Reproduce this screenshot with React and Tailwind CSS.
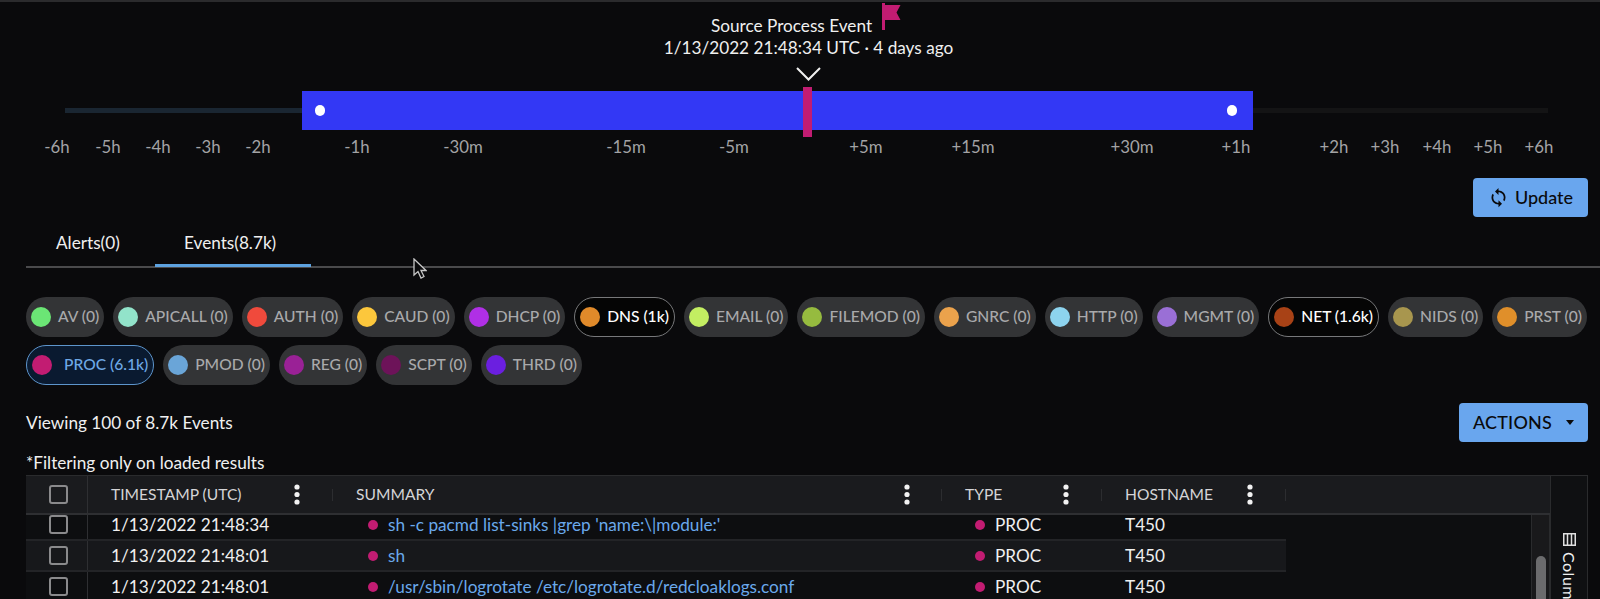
import React from 'react';
import { MdSync } from 'react-icons/md';

const ticks = [
  ['-6h', 57], ['-5h', 108], ['-4h', 158], ['-3h', 208], ['-2h', 258], ['-1h', 357],
  ['-30m', 463], ['-15m', 626], ['-5m', 734], ['+5m', 866], ['+15m', 973], ['+30m', 1132],
  ['+1h', 1236], ['+2h', 1334], ['+3h', 1385], ['+4h', 1437], ['+5h', 1488], ['+6h', 1539],
];

const chips = [
  { label: 'AV (0)', color: '#6be675' },
  { label: 'APICALL (0)', color: '#92e3ca' },
  { label: 'AUTH (0)', color: '#f04a3c' },
  { label: 'CAUD (0)', color: '#fcc73c' },
  { label: 'DHCP (0)', color: '#b02fe6' },
  { label: 'DNS (1k)', color: '#e08a2a', state: 'on' },
  { label: 'EMAIL (0)', color: '#c3ee62' },
  { label: 'FILEMOD (0)', color: '#96bb3f' },
  { label: 'GNRC (0)', color: '#eba24c' },
  { label: 'HTTP (0)', color: '#8dd3ee' },
  { label: 'MGMT (0)', color: '#9a6fd6' },
  { label: 'NET (1.6k)', color: '#a84216', state: 'on' },
  { label: 'NIDS (0)', color: '#a8964e' },
  { label: 'PRST (0)', color: '#e08f2a' },
  { label: 'PROC (6.1k)', color: '#c21c72', state: 'active' },
  { label: 'PMOD (0)', color: '#6aa5d8' },
  { label: 'REG (0)', color: '#9a2196' },
  { label: 'SCPT (0)', color: '#6d1359' },
  { label: 'THRD (0)', color: '#6b1fe0' },
];

const rows = [
  { time: '1/13/2022 21:48:34', summary: "sh -c pacmd list-sinks |grep 'name:\\|module:'", h: 'h-[26px]', shift: 'pb-[5px]' },
  { time: '1/13/2022 21:48:01', summary: 'sh', h: 'h-[31px]', shift: '', stripe: true },
  { time: '1/13/2022 21:48:01', summary: '/usr/sbin/logrotate /etc/logrotate.d/redcloaklogs.conf', h: 'h-[31px]', shift: '' },
];

const Chip = ({ label, color, state }) => {
  let look = 'bg-[#333436] text-[#a9a9ab]';
  if (state === 'on') look = 'bg-[#050505] text-white border border-[#77787a]';
  if (state === 'active') look = 'bg-[#0a1a30] text-[#6ea8e6] border border-[#5d95cc]';
  return (
    <div className={`flex items-center h-10 rounded-full pl-[5px] pr-[5px] text-[15.6px] font-medium whitespace-nowrap ${look}`}>
      <span className="w-5 h-5 rounded-full mr-[7px] shrink-0" style={{ backgroundColor: color }} />
      {state === 'active' && <span className="w-[5px]" />}
      {label}
    </div>
  );
};

const Checkbox = () => (
  <span className="block w-[19px] h-[19px] rounded-[3px] border-2 border-[#8a8a8c]" />
);

const Kebab = () => (
  <svg className="block" width="6" height="21" viewBox="0 0 6 21" fill="#f2f2f2">
    <circle cx="3" cy="3" r="2.6" />
    <circle cx="3" cy="10.5" r="2.6" />
    <circle cx="3" cy="18" r="2.6" />
  </svg>
);

const HeaderCell = ({ title, width, kebabGap }) => (
  <div className={`flex items-center h-full pl-[23px] ${width}`}>
    <span className="whitespace-nowrap">{title}</span>
    <span className={kebabGap}><Kebab /></span>
    <span className="ml-auto w-px h-3 bg-[#2c2d30]" />
  </div>
);

export default function App() {
  return (
    <div className="h-[599px] overflow-hidden bg-[#0a0a0c] border-t-2 border-[#2b2b2d] text-[#f0f0f0] font-['Lato',sans-serif] text-[17.2px]">
      {/* Timeline */}
      <div className="relative h-[174px]">
        <div className="absolute left-0 right-0 top-[13px] text-center pl-[17px] leading-[22px]">
          <div className="pr-[34px]">Source Process Event</div>
          <div>1/13/2022 21:48:34 UTC · 4 days ago</div>
        </div>
        <svg className="absolute left-[882px] top-[1px]" width="19" height="27" viewBox="0 0 19 27" fill="#c21c72">
          <path d="M0 0h3v2h15.500l-4 7.500 4 7.500H3v10H0z" />
        </svg>
        <svg className="absolute left-[796px] top-[65px]" width="25" height="14" viewBox="0 0 25 14" fill="none" stroke="#f0f0f0" strokeWidth="2">
          <path d="M1 1l11.500 11.500L24 1" />
        </svg>
        <div className="absolute left-[65px] w-[238px] top-[106px] h-[5px] bg-[#1a2632]" />
        <div className="absolute left-[1253px] w-[295px] top-[106px] h-[5px] bg-[#141415]" />
        <div className="absolute left-[302px] w-[951px] top-[89px] h-[39px] bg-[#3338f5]" />
        <div className="absolute left-[315px] top-[103px] w-[10px] h-[11px] rounded-full bg-white" />
        <div className="absolute left-[1227px] top-[103px] w-[10px] h-[11px] rounded-full bg-white" />
        <div className="absolute left-[803px] top-[85px] w-[9px] h-[50px] bg-[#c21c72]" />
        {ticks.map(([label, x]) => (
          <span
            key={label}
            className="absolute top-[135px] -translate-x-1/2 text-[16.8px] leading-5 text-[#a3a3a5]"
            style={{ left: x }}
          >
            {label}
          </span>
        ))}
      </div>

      <div className="flex justify-end pr-3 mt-[2px]">
        <button className="flex items-center pl-[15px] gap-[6px] w-[115px] h-[39px] rounded bg-[#69a6ee] text-[#0a0a0c] text-[18px] font-medium">
          <MdSync className="w-[21px] h-[21px]" />
          Update
        </button>
      </div>

      {/* Tabs */}
      <div className="relative flex h-[51px] ml-[26px] border-b-2 border-[#4a4a4c] pt-[13px]">
        <div className="w-[129px] pl-[30px]">Alerts(0)</div>
        <div className="w-[156px] pl-[29px]">Events(8.7k)</div>
        <div className="absolute left-[129px] w-[156px] -bottom-[1px] h-[3px] bg-[#5da2e0]" />
        <svg className="absolute left-[387px] top-[41px]" width="14" height="22" viewBox="0 0 14 22" fill="#0a0a0c" stroke="#c8c8c8" strokeWidth="1.300">
          <path d="M1 1v16l4-3.500 3 6.500 3-1.500-3-6h5z" />
        </svg>
      </div>

      {/* Type filters */}
      <div className="flex flex-wrap gap-x-[9px] gap-y-[8px] pl-[26px] pr-1 mt-[29px]">
        {chips.map((chip) => (
          <Chip key={chip.label} {...chip} />
        ))}
      </div>

      <div className="relative h-[90px] pl-[26px]">
        <div className="pt-[26px] leading-6">Viewing 100 of 8.7k Events</div>
        <div className="pt-[16px] leading-6">*Filtering only on loaded results</div>
        <button className="absolute right-3 top-[18px] flex items-center justify-center gap-[14px] w-[129px] h-[39px] rounded bg-[#69a6ee] text-[#0a0a0c] text-[18px] tracking-[0.2px] font-medium">
          ACTIONS
          <span className="w-0 h-0 border-x-[4px] border-x-transparent border-t-[5px] border-t-[#0a0a0c]" />
        </button>
      </div>

      {/* Table */}
      <div className="flex ml-[26px] mr-3 border-t border-[#2a2b2d] bg-[#0d0e10]">
        <div className="flex-1 min-w-0">
          <div className="flex items-center h-[39px] bg-[#1a1b1e] border-b-2 border-[#2e2f32] text-[15.6px] text-[#d4d4d6]">
            <div className="flex items-center pl-[23px] w-[62px] h-full border-r border-[#2e2f32]">
              <Checkbox />
            </div>
            <HeaderCell title="TIMESTAMP (UTC)" width="w-[245px]" kebabGap="ml-[52px]" />
            <HeaderCell title="SUMMARY" width="w-[609px]" kebabGap="ml-[469px]" />
            <HeaderCell title="TYPE" width="w-[160px]" kebabGap="ml-[61px]" />
            <HeaderCell title="HOSTNAME" width="w-[184px]" kebabGap="ml-[34px]" />
          </div>
          <div className="flex">
            <div className="flex-1 min-w-0">
              {rows.map((row, i) => (
                <div key={i} className={`flex items-center w-[1260px] border-b-2 border-[#232427] ${row.h} ${row.stripe ? 'bg-[#17181b]' : ''}`}>
                  <div className={`flex items-center pl-[23px] w-[62px] h-full border-r border-[#2e2f32] ${row.shift}`}>
                    <Checkbox />
                  </div>
                  <div className={`flex items-center h-full w-[245px] pl-[23px] ${row.shift}`}>{row.time}</div>
                  <div className={`flex items-center h-full w-[609px] pl-[35px] text-[#6aa9ec] ${row.shift}`}>
                    <span className="w-[10px] h-[10px] rounded-full bg-[#c21c72] mr-[10px]" />
                    {row.summary}
                  </div>
                  <div className={`flex items-center h-full w-[160px] pl-[33px] ${row.shift}`}>
                    <span className="w-[10px] h-[10px] rounded-full bg-[#c21c72] mr-[10px]" />
                    PROC
                  </div>
                  <div className={`flex items-center h-full w-[184px] pl-[23px] ${row.shift}`}>T450</div>
                </div>
              ))}
            </div>
            {/* Scrollbar */}
            <div className="w-[19px] h-[84px] bg-[#19191b] border-x border-[#2a2b2d] pt-[41px] flex justify-center">
              <div className="w-[10px] h-full rounded-t-full bg-[#6b6b6d]" />
            </div>
          </div>
        </div>
        <div className="w-[38px] h-[124px] border-x border-[#2a2b2d] bg-[#0f1012] flex flex-col items-center pt-[57px] text-[16px] tracking-[0.5px]">
          <svg className="shrink-0" width="13" height="13" viewBox="0 0 13 13" fill="none" stroke="#e0e0e0" strokeWidth="1.500">
            <rect x="0.750" y="0.750" width="11.500" height="11.500" />
            <path d="M4.500 0.750v11.500M8.500 0.750v11.500" />
          </svg>
          <span className="mt-[6px] [writing-mode:vertical-rl]">Columns</span>
        </div>
      </div>
    </div>
  );
}
